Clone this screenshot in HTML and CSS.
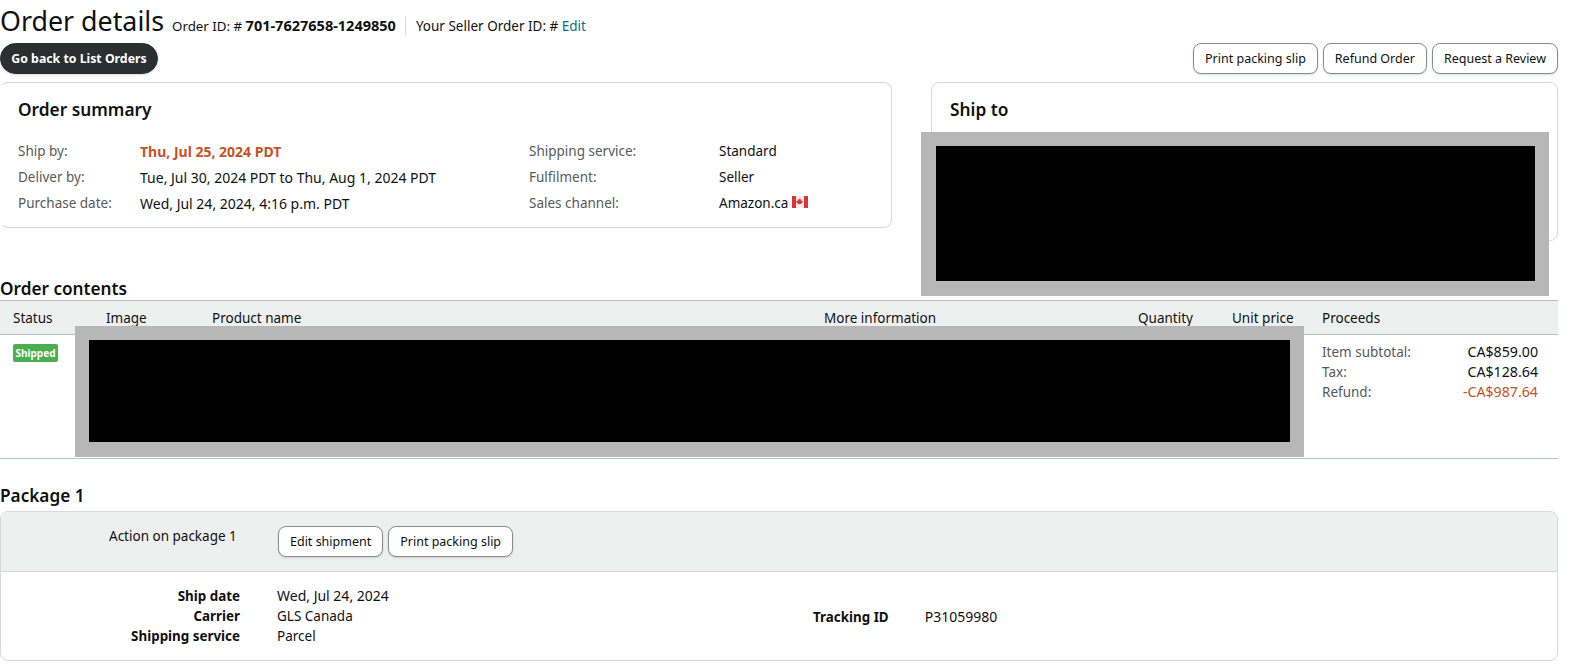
FILE: index.html
```html
<!DOCTYPE html>
<html lang="en">
<head>
<meta charset="utf-8">
<title>Order details</title>
<link rel="stylesheet" href="styles.css">
</head>
<body>
<div class="page">
  <header class="title-row">
    <h1 class="title">Order details</h1>
    <span class="meta">Order ID: # <b>701-7627658-1249850</b></span>
    <span class="meta divided">Your Seller Order ID: # <a class="link" href="#">Edit</a></span>
  </header>
  <div class="action-row">
    <button class="btn btn-dark">Go back to List Orders</button>
    <div class="btn-group">
      <button class="btn">Print packing slip</button>
      <button class="btn">Refund Order</button>
      <button class="btn">Request a Review</button>
    </div>
  </div>
  <div class="summary-row">
    <section class="card summary">
      <h2 class="card-title">Order summary</h2>
      <dl class="summary-grid">
        <dt>Ship by:</dt><dd class="date urgent">Thu, Jul 25, 2024 PDT</dd>
        <dt>Shipping service:</dt><dd>Standard</dd>
        <dt>Deliver by:</dt><dd class="date">Tue, Jul 30, 2024 PDT to Thu, Aug 1, 2024 PDT</dd>
        <dt>Fulfilment:</dt><dd>Seller</dd>
        <dt>Purchase date:</dt><dd class="date">Wed, Jul 24, 2024, 4:16 p.m. PDT</dd>
        <dt>Sales channel:</dt>
        <dd>Amazon.ca
          <svg class="flag" viewBox="0 0 16 12" aria-hidden="true">
            <rect width="16" height="12" fill="#f4eaea"/>
            <rect width="4" height="12" fill="#d8343a"/>
            <rect x="12" width="4" height="12" fill="#d8343a"/>
            <path d="M8 2.6l.7 1.2.7-.3-.3 1.7.8-.5.3.6.9-.2-.3 1-.3.2-1.5 1.2.2.6-1.5-.2V8.6h-.4v-.7l-1.5.2.2-.6-1.5-1.2-.3-.2-.3-1 .9.2.3-.6.8.5-.3-1.7.7.3z" fill="#d8343a"/>
          </svg>
        </dd>
      </dl>
    </section>
    <section class="card ship">
      <h2 class="card-title">Ship to</h2>
      <div class="redaction redaction-ship"></div>
    </section>
  </div>
  <h2 class="section-title contents-title">Order contents</h2>
  <div class="table">
    <div class="table-head">
      <span>Status</span><span>Image</span><span>Product name</span><span>More information</span><span>Quantity</span><span>Unit price</span><span>Proceeds</span>
    </div>
    <div class="table-row">
      <div><span class="badge">Shipped</span></div>
      <div class="proceeds">
        <div class="proceeds-line"><span class="muted">Item subtotal:</span><span class="amount">CA$859.00</span></div>
        <div class="proceeds-line"><span class="muted">Tax:</span><span class="amount">CA$128.64</span></div>
        <div class="proceeds-line"><span class="muted">Refund:</span><span class="amount negative">-CA$987.64</span></div>
      </div>
      <div class="redaction redaction-row"></div>
    </div>
  </div>
  <h2 class="section-title package-title">Package 1</h2>
  <section class="package">
    <div class="package-actions">
      <span class="package-label">Action on package 1</span>
      <div class="btn-group">
        <button class="btn">Edit shipment</button>
        <button class="btn">Print packing slip</button>
      </div>
    </div>
    <div class="package-details">
      <dl class="detail-grid">
        <dt>Ship date</dt><dd class="date">Wed, Jul 24, 2024</dd>
        <dt>Carrier</dt><dd>GLS Canada</dd>
        <dt>Shipping service</dt><dd>Parcel</dd>
      </dl>
      <dl class="tracking">
        <dt>Tracking ID</dt><dd class="date">P31059980</dd>
      </dl>
    </div>
  </section>
</div>
</body>
</html>
```
FILE: styles.css
```css
* { box-sizing: border-box; }
html, body { margin: 0; height: 669px; overflow: hidden; background: #fff; }
body { font-family: "Noto Sans", "Liberation Sans", sans-serif; font-size: 13.5px; color: #0f1111; }
dl, dd, dt, h1, h2 { margin: 0; font-weight: inherit; }
.page { width: 1558px; }
.date { font-size: 14px; }

.title-row { display: flex; align-items: baseline; height: 43px; padding-top: 1px; }
.title { font-size: 26.8px; line-height: 40px; font-weight: 400; margin-right: 8px; }
.meta { font-size: 13.3px; }
.meta b { font-size: 14.5px; font-weight: 700; }
.divided { font-size: 13.5px; margin-left: 9px; padding-left: 10px; border-left: 1px solid #d5d9d9; }
.link { color: #007185; text-decoration: none; }

.action-row { display: flex; justify-content: space-between; height: 31px; margin-bottom: 8px; }
.btn-group { display: flex; gap: 5px; }
.btn { height: 31px; padding: 0 11px; font: inherit; font-size: 12.5px; color: #0f1111; background: #fff; border: 1px solid #888c8c; border-radius: 8px; box-shadow: 0 1px 2px rgba(15, 17, 17, .15); white-space: nowrap; }
.btn-dark { width: 158px; padding: 0; font-size: 12.3px; background: #2b2f30; border-color: #2b2f30; border-radius: 16px; color: #fff; font-weight: 700; }

.summary-row { display: flex; gap: 39px; align-items: flex-start; }
.card { position: relative; border: 1px solid #d5d9d9; border-radius: 8px; padding: 15px 18px 0; }
.summary { width: 892px; height: 146px; border-left-color: transparent; padding-left: 17px; }
.ship { flex: 1; height: 159px; }
.card-title { font-size: 17.3px; line-height: 24px; font-weight: 600; }
.summary-grid { display: grid; grid-template-columns: 122px 389px 190px 1fr; grid-auto-rows: 26px; align-items: center; margin-top: 16px; }
.summary-grid dt { color: #565959; }
.urgent { color: #c7511f; font-weight: 700; }
.flag { width: 16px; height: 12px; vertical-align: 0; }

.section-title { font-size: 17.2px; line-height: 20px; font-weight: 600; }
.contents-title { margin-top: 38px; height: 21px; }
.table-head, .table-row { display: grid; grid-template-columns: 93px 106px 612px 314px 94px 90px 1fr; padding-left: 13px; }
.table-head { height: 35px; align-items: center; padding-top: 1px; background: #eef0f0; border-top: 1px solid #b8bebe; border-bottom: 1px solid #b8bebe; }
.table-row { position: relative; height: 124px; border-bottom: 1px solid #b8bebe; padding-top: 9px; }
.badge { display: block; width: 45px; height: 18px; background: #4bae4f; border-radius: 2px; color: #fff; font-size: 10px; line-height: 18px; font-weight: 700; text-align: center; }
.proceeds { grid-column: 7; margin-top: -2px; padding-right: 20px; }
.proceeds-line { display: flex; justify-content: space-between; line-height: 20px; }
.amount { font-size: 14.2px; }
.muted { color: #565959; }
.negative { color: #c7511f; }

.redaction { position: absolute; background: #000; border: 14px solid #b7b7b7; }
.redaction-ship { left: -11px; top: 49px; width: 628px; height: 164px; border-left-width: 15px; border-bottom-width: 15px; }
.redaction-row { left: 75px; top: -9px; width: 1229px; height: 131px; border-bottom-width: 15px; }

.package-title { margin-top: 27px; height: 25px; }
.package { height: 150px; border: 1px solid #d5d9d9; border-radius: 8px; overflow: hidden; }
.package-actions { display: flex; align-items: flex-start; height: 60px; padding: 14px 0 0 108px; background: #eef0f0; border-bottom: 1px solid #d5d9d9; }
.package-label { width: 169px; line-height: 20px; }
.package-details { display: flex; align-items: center; height: 89px; padding-bottom: 2px; }
.package-details dt { font-size: 13.4px; font-weight: 700; }
.detail-grid { display: grid; grid-template-columns: 239px 1fr; column-gap: 37px; width: 812px; line-height: 20px; }
.detail-grid dt { text-align: right; }
.tracking { display: flex; align-items: baseline; gap: 36px; margin-top: 2px; }
```
